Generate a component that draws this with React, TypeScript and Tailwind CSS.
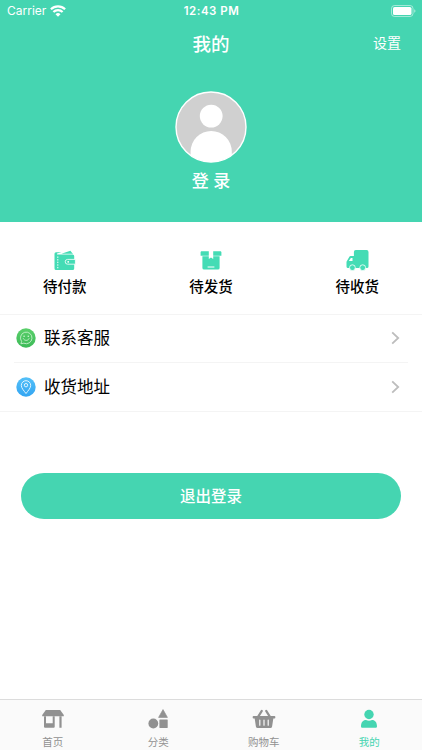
import type { ReactNode } from 'react';
import clsx from 'clsx';

function WifiIcon() {
  return (
    <svg width="16" height="12" viewBox="0 0 16 12" fill="white">
      <path d="M8 11.8 10.5 9.2a3.5 3.5 0 0 0-5 0Z" />
      <path
        d="M3.4 7a6.5 6.5 0 0 1 9.2 0M.9 4.3a10.2 10.2 0 0 1 14.2 0"
        fill="none"
        stroke="white"
        strokeWidth="2.2"
      />
    </svg>
  );
}

function BatteryIcon() {
  return (
    <svg width="25" height="12" viewBox="0 0 25 12">
      <rect
        x="0.5"
        y="0.5"
        width="21.5"
        height="11"
        rx="3"
        fill="none"
        stroke="white"
        strokeOpacity="0.5"
      />
      <rect x="2" y="2" width="18.5" height="8" rx="1.6" fill="white" />
      <path d="M23.3 4.2v3.6a2 2 0 0 0 0-3.6Z" fill="white" fillOpacity="0.6" />
    </svg>
  );
}

function Avatar() {
  return (
    <svg width="72" height="72" viewBox="0 0 72 72">
      <defs>
        <clipPath id="avatar">
          <circle cx="36" cy="36" r="35" />
        </clipPath>
      </defs>
      <circle cx="36" cy="36" r="35" fill="#d0d0d0" />
      <g clipPath="url(#avatar)" fill="white">
        <circle cx="36.2" cy="25.1" r="11.4" />
        <path d="M15.6 72V60.6a20.6 20.6 0 0 1 41.2 0V72Z" />
      </g>
      <circle
        cx="36"
        cy="36"
        r="35"
        fill="none"
        stroke="white"
        strokeWidth="1.4"
      />
    </svg>
  );
}

function WalletIcon() {
  return (
    <svg width="22" height="22" viewBox="0 0 22 22" fill="#44dcb5">
      <path d="M7.4 3.8 16.4.8l1.4 1.6 1.2 1.4Z" />
      <path d="M2.2 2.2h5.2L3 3.6v.8h15.6A1.6 1.6 0 0 1 20.200 6v12.500a1.600 1.600 0 0 1-1.600 1.600H2.100A1.600 1.600 0 0 1 .5 18.500V3.800a1.600 1.600 0 0 1 1.700-1.600Z" />
      <path
        d="M3.8 6.5v12.4"
        stroke="white"
        strokeWidth="1"
        strokeDasharray="1.4 1.2"
      />
      <path
        d="M13.6 9.400h7.800v4.800h-7.800a2.400 2.400 0 0 1 0-4.800Z"
        stroke="white"
        strokeWidth="0.8"
      />
      <circle cx="14.2" cy="11.8" r="0.9" fill="white" />
    </svg>
  );
}

function BoxIcon() {
  return (
    <svg width="22" height="22" viewBox="0 0 22 22" fill="#44dcb5">
      <path d="M1.2 1.3h7.6v4.5H.6V2Zm12 0h7.6l.6.7v3.8h-8.2Z" />
      <path d="M2.4 6.2h6.4v2.7L11 7.6l2.2 1.3V6.2h6.4v11.7a1.7 1.7 0 0 1-1.700 1.700H4.100a1.700 1.700 0 0 1-1.700-1.700Z" />
      <path d="M7.6 17h6.800" stroke="white" strokeWidth="1" />
    </svg>
  );
}

function TruckIcon() {
  return (
    <svg width="23" height="22" viewBox="0 0 23 22" fill="#44dcb5">
      <path d="M9.8 0h10.8a1.9 1.9 0 0 1 1.9 1.9v14.600a1.500 1.500 0 0 1-1.500 1.500H2a1.500 1.500 0 0 1-1.500-1.500v-4.700L3.200 7a1.700 1.700 0 0 1 1.500-.9h3.200V1.900A1.900 1.900 0 0 1 9.800 0Z" />
      <path d="M4.8 8h1.700v3H2.900Z" fill="white" />
      <g stroke="white" strokeWidth="0.8">
        <circle cx="6.4" cy="17.7" r="2.9" />
        <circle cx="16.7" cy="17.7" r="2.9" />
      </g>
    </svg>
  );
}

function ServiceIcon() {
  return (
    <svg width="20" height="20" viewBox="0 0 20 20" fill="none">
      <defs>
        <linearGradient id="service" x1="0" y1="0" x2="0" y2="1">
          <stop stopColor="#5bd06b" />
          <stop offset="1" stopColor="#3cba58" />
        </linearGradient>
      </defs>
      <circle cx="10" cy="10" r="9.7" fill="url(#service)" />
      <g stroke="#d4f5d8" strokeWidth="0.8" strokeLinecap="round">
        <path
          d="M5.4 13.2a5.8 5.8 0 1 1 2.4 2l-2.5.5Z"
          strokeLinejoin="round"
        />
        <path d="M7.3 10.6c1 2.5 4.8 2.5 5.8 0" />
      </g>
      <circle cx="8.1" cy="8.2" r="0.8" fill="#d4f5d8" />
      <circle cx="12.3" cy="8.2" r="0.8" fill="#d4f5d8" />
    </svg>
  );
}

function AddressIcon() {
  return (
    <svg width="20" height="20" viewBox="0 0 20 20" fill="none">
      <defs>
        <linearGradient id="address" x1="0" y1="0" x2="0" y2="1">
          <stop stopColor="#54c0f8" />
          <stop offset="1" stopColor="#33a5f2" />
        </linearGradient>
      </defs>
      <circle cx="10" cy="10" r="9.7" fill="url(#address)" />
      <g stroke="#e0f4ff" strokeWidth="1">
        <path
          d="M10 16.5C7.8 13.6 5.3 11 5.3 8.4a4.7 4.7 0 0 1 9.4 0c0 2.6-2.5 5.2-4.7 8.1Z"
          strokeLinejoin="round"
        />
        <circle cx="10" cy="8.2" r="1.7" />
      </g>
    </svg>
  );
}

function ChevronIcon() {
  return (
    <svg width="9" height="14" viewBox="0 0 9 14" fill="none">
      <path d="m1.2 1.3 6 5.7-6 5.7" stroke="#bdbdbd" strokeWidth="1.8" />
    </svg>
  );
}

function StoreIcon() {
  return (
    <svg width="24" height="20" viewBox="0 0 24 20" fill="currentColor">
      <path d="M4.8 1h14.4l3.6 5v1.3H1.2V6Z" />
      <path d="M3 7.300h2v7h6.700v-7h2v10.400a1 1 0 0 1-1 1H4a1 1 0 0 1-1-1Zm15.400 0h2.200v11.400h-2.200Z" />
    </svg>
  );
}

function CategoryIcon() {
  return (
    <svg width="20" height="20" viewBox="0 0 20 20" fill="currentColor">
      <path
        d="m15 .6 4.4 7.800h-8.800Z"
        stroke="currentColor"
        strokeWidth="0.7"
        strokeLinejoin="round"
      />
      <circle cx="5.3" cy="14.5" r="4.900" />
      <rect x="11.4" y="10.5" width="8.3" height="8.4" rx="0.4" />
    </svg>
  );
}

function BasketIcon() {
  return (
    <svg width="24" height="20" viewBox="0 0 24 20" fill="currentColor">
      <path
        d="M6.2 7.7 9.800 1.900M17.800 7.700 14.200 1.900"
        stroke="currentColor"
        strokeWidth="2.2"
        strokeLinecap="round"
      />
      <rect x="0.7" y="7" width="22.6" height="2.6" rx="0.8" />
      <path d="M2.6 9h18.800l-1.300 8.400a1.800 1.800 0 0 1-1.800 1.500H5.700a1.800 1.800 0 0 1-1.800-1.500Z" />
      <path
        d="M7.800 11v5.200M12 11v5.200M16.200 11v5.200"
        stroke="#fafafa"
        strokeWidth="1.2"
        strokeLinecap="round"
      />
    </svg>
  );
}

function UserIcon() {
  return (
    <svg width="20" height="20" viewBox="0 0 20 20" fill="currentColor">
      <circle cx="10" cy="5.5" r="4.7" />
      <path d="M2 17.3c0-3.9 1.9-6.3 5-6.3 1 .5 2 .7 3 .7s2-.2 3-.7c3.1 0 5 2.4 5 6.3 0 1-.6 1.5-1.6 1.5H3.600c-1 0-1.600-.5-1.600-1.500Z" />
    </svg>
  );
}

const orders = [
  { label: '待付款', icon: <WalletIcon /> },
  { label: '待发货', icon: <BoxIcon /> },
  { label: '待收货', icon: <TruckIcon /> },
];

const tabs = [
  { label: '首页', icon: <StoreIcon /> },
  { label: '分类', icon: <CategoryIcon /> },
  { label: '购物车', icon: <BasketIcon /> },
  { label: '我的', icon: <UserIcon />, active: true },
];

function MenuRow({ icon, label }: { icon: ReactNode; label: string }) {
  return (
    <button className="flex h-full w-full items-center pr-[22px] pl-4 text-left">
      {icon}
      <span className="ml-2 flex-1 text-[16.5px] leading-6">{label}</span>
      <ChevronIcon />
    </button>
  );
}

export default function App() {
  return (
    <div className="flex h-[750px] w-full flex-col overflow-hidden bg-white font-['Inter','Noto_Sans_CJK_SC',sans-serif] text-black">
      <header className="h-[222px] shrink-0 bg-[#45d5b1] text-white">
        <div className="grid h-[22px] grid-cols-3 items-center pr-1.5 pl-[7px] text-xs">
          <div className="flex items-center gap-1">
            <span>Carrier</span>
            <WifiIcon />
          </div>
          <span className="pt-0.5 text-center text-[11.5px] font-semibold tracking-[0.5px] whitespace-nowrap">
            12:43 PM
          </span>
          <div className="flex justify-end">
            <BatteryIcon />
          </div>
        </div>
        <div className="grid h-11 grid-cols-3 items-center px-[21px]">
          <h1 className="col-start-2 text-center text-[18.5px] leading-6 font-medium">
            我的
          </h1>
          <button className="pb-0.5 text-right text-sm">设置</button>
        </div>
        <div className="flex flex-col items-center pt-[25px]">
          <Avatar />
          <span className="mt-1.5 text-[17px] leading-6 font-medium">
            登 录
          </span>
        </div>
      </header>

      <section className="flex h-[92px] shrink-0 justify-between px-[43px] pt-7">
        {orders.map(({ label, icon }) => (
          <button key={label} className="flex flex-col items-center">
            {icon}
            <span className="mt-[5px] text-[14.5px] leading-5 font-medium">
              {label}
            </span>
          </button>
        ))}
      </section>

      <section className="flex h-[98px] shrink-0 flex-col border-y border-[#f4f4f4]">
        <div className="h-[47px] pb-px">
          <MenuRow icon={<ServiceIcon />} label="联系客服" />
        </div>
        <div className="mx-3.5 h-px bg-[#f4f4f4]" />
        <div className="h-12">
          <MenuRow icon={<AddressIcon />} label="收货地址" />
        </div>
      </section>

      <div className="flex-1 px-[21px] pt-[61px]">
        <button className="h-[46px] w-full rounded-full bg-[#45d5b1] pt-0.5 text-[15.5px] font-medium text-white">
          退出登录
        </button>
      </div>

      <nav className="grid h-[51px] shrink-0 grid-cols-4 border-t border-[#dcdcdc] bg-[#fafafa]">
        {tabs.map(({ label, icon, active }) => (
          <button
            key={label}
            className={clsx(
              'flex flex-col items-center pt-[9px]',
              active ? 'text-[#45d5b1]' : 'text-[#919191]'
            )}
          >
            {icon}
            <span className="mt-1.5 text-[10.5px] leading-4">{label}</span>
          </button>
        ))}
      </nav>
    </div>
  );
}
